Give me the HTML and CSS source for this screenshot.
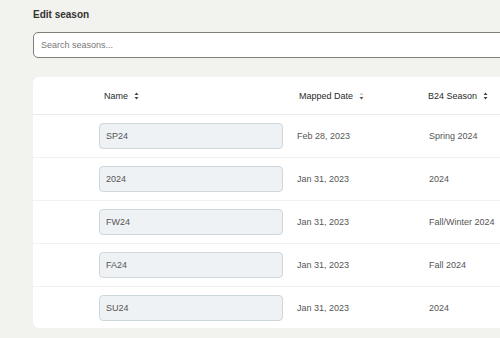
FILE: index.html
```html
<!DOCTYPE html>
<html lang="en">
<head>
  <meta charset="utf-8">
  <title>Edit season</title>
  <link rel="stylesheet" href="styles.css">
</head>
<body>
  <div class="page">
    <h1 class="titulo">Edit season</h1>
    <input class="buscar" placeholder="Search seasons...">

    <div class="tarjeta">
      <div class="fila cabecera">
        <div class="col col_nombre"><span class="etiqueta">Name</span>
          <svg class="orden" width="5" height="8" viewBox="0 0 5 8"><path d="M2.5 0.5 L4.5 3 L0.5 3 Z" fill="#444"/><path d="M2.5 7.5 L4.5 5 L0.5 5 Z" fill="#444"/></svg>
        </div>
        <div class="col col_fecha"><span class="etiqueta">Mapped Date</span>
          <svg class="orden" width="5" height="8" viewBox="0 0 5 8"><path d="M2.5 0.5 L4.5 3 L0.5 3 Z" fill="#ccc"/><path d="M2.5 7.5 L4.5 5 L0.5 5 Z" fill="#555"/></svg>
        </div>
        <div class="col col_temporada"><span class="etiqueta">B24 Season</span>
          <svg class="orden" width="5" height="8" viewBox="0 0 5 8"><path d="M2.5 0.5 L4.5 3 L0.5 3 Z" fill="#444"/><path d="M2.5 7.5 L4.5 5 L0.5 5 Z" fill="#444"/></svg>
        </div>
      </div>

      <div class="fila">
        <div class="col col_nombre"><input class="entrada" value="SP24"></div>
        <div class="col col_fecha">Feb 28, 2023</div>
        <div class="col col_temporada">Spring 2024</div>
      </div>
      <div class="fila">
        <div class="col col_nombre"><input class="entrada" value="2024"></div>
        <div class="col col_fecha">Jan 31, 2023</div>
        <div class="col col_temporada">2024</div>
      </div>
      <div class="fila">
        <div class="col col_nombre"><input class="entrada" value="FW24"></div>
        <div class="col col_fecha">Jan 31, 2023</div>
        <div class="col col_temporada">Fall/Winter 2024</div>
      </div>
      <div class="fila">
        <div class="col col_nombre"><input class="entrada" value="FA24"></div>
        <div class="col col_fecha">Jan 31, 2023</div>
        <div class="col col_temporada">Fall 2024</div>
      </div>
      <div class="fila ultima">
        <div class="col col_nombre"><input class="entrada" value="SU24"></div>
        <div class="col col_fecha">Jan 31, 2023</div>
        <div class="col col_temporada">2024</div>
      </div>
    </div>
  </div>
</body>
</html>
```

FILE: styles.css
```css
*{
  margin: 0;
  padding: 0;
  box-sizing: border-box;
  font-family: "Liberation Sans", Arial, sans-serif;
}

body{
  background: #f2f2ee;
  overflow: hidden;
  width: 500px;
  height: 338px;
}

.page{
  width: 600px;
  padding: 9px 0 0 33px;
}

.titulo{
  font-size: 10px;
  font-weight: bold;
  color: #333;
  line-height: 12px;
  height: 12px;
}

.buscar{
  display: block;
  margin-top: 11px;
  width: 100%;
  height: 26px;
  border: 1px solid #7c8278;
  border-radius: 5px;
  background: white;
  padding: 0 7px;
  font-size: 9px;
  color: #333;
  outline: none;
}

.buscar::placeholder{
  color: #777;
}

.tarjeta{
  margin-top: 19px;
  background: white;
  border-radius: 6px;
  overflow: hidden;
}

.fila{
  display: flex;
  align-items: center;
  height: 43px;
  border-bottom: 1px solid #f0f2f2;
  font-size: 9px;
  color: #555;
}

.cabecera{
  height: 38px;
  border-bottom: 1px solid #e6ebee;
  color: #2a2a2a;
}

.ultima{
  height: 41px;
  border-bottom: none;
}

.col{
  display: flex;
  align-items: center;
}

.col_nombre{
  width: 264px;
  padding-left: 66px;
}

.col_fecha{
  width: 132px;
}

.col_temporada{
  flex: 1;
}

.cabecera .col_nombre{
  padding-left: 71px;
}

.cabecera .col_fecha{
  padding-left: 2px;
}

.cabecera .col_temporada{
  margin-left: -1px;
}

.orden{
  margin-left: 6px;
}

.entrada{
  width: 184px;
  height: 26px;
  border: 1px solid #cdd7dc;
  border-radius: 4px;
  background: #eef2f4;
  padding: 0 6px;
  font-size: 9px;
  color: #555;
  outline: none;
}
```
